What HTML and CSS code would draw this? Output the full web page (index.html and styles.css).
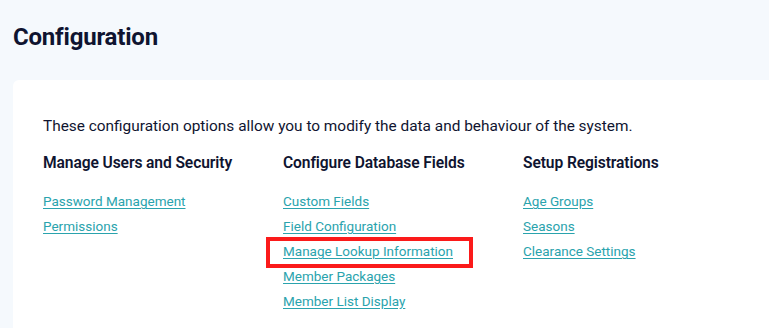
FILE: index.html
```html
<!DOCTYPE html>
<html lang="en">
<head>
    <meta charset="UTF-8">
    <title>Configuration</title>
    <link rel="stylesheet" href="styles.css">
</head>
<body>
    <div class="page">
        <h1 class="page-title">Configuration</h1>

        <div class="card">
            <p class="card-intro">These configuration options allow you to modify the data and behaviour of the system.</p>

            <div class="config-columns">
                <div class="config-group">
                    <h2 class="config-heading">Manage Users and Security</h2>
                    <ul class="config-links">
                        <li><a href="#">Password Management</a></li>
                        <li><a href="#">Permissions</a></li>
                    </ul>
                </div>

                <div class="config-group">
                    <h2 class="config-heading">Configure Database Fields</h2>
                    <ul class="config-links">
                        <li><a href="#">Custom Fields</a></li>
                        <li><a href="#">Field Configuration</a></li>
                        <li class="highlight"><a href="#">Manage Lookup Information</a></li>
                        <li><a href="#">Member Packages</a></li>
                        <li><a href="#">Member List Display</a></li>
                    </ul>
                </div>

                <div class="config-group">
                    <h2 class="config-heading">Setup Registrations</h2>
                    <ul class="config-links">
                        <li><a href="#">Age Groups</a></li>
                        <li><a href="#">Seasons</a></li>
                        <li><a href="#">Clearance Settings</a></li>
                    </ul>
                </div>
            </div>
        </div>
    </div>
</body>
</html>
```

FILE: styles.css
```css
/* Page */
body {
    margin: 0;
    background: #f5f9fd;
    font-family: Roboto, "Liberation Sans", sans-serif;
    color: #0f1430;
}

.page {
    padding: 22px 0 0 13px;
    height: 306px;
    overflow: hidden;
}

.page-title {
    font-size: 24px;
    font-weight: 700;
    margin: 0 0 28px 0;
    line-height: 30px;
    letter-spacing: -0.2px;
}

/* Card */
.card {
    background: white;
    border-radius: 6px 0 0 6px;
    padding: 36px 30px 20px;
    margin-right: -20px;
    height: 260px;
}

.card-intro {
    font-size: 15.4px;
    line-height: 20px;
    margin: 0 0 17px 0;
}

/* Columns */
.config-columns {
    display: flex;
}

.config-group {
    width: 240px;
    flex-shrink: 0;
}

.config-heading {
    font-size: 15.6px;
    font-weight: 600;
    line-height: 20px;
    margin: 0 0 15px 0;
    letter-spacing: -0.1px;
}

.config-links {
    list-style: none;
    margin: 0;
    padding: 0;
}

.config-links li {
    height: 25px;
    line-height: 25px;
}

.config-links a {
    color: #2aa3ad;
    font-size: 13.5px;
    text-decoration: underline;
    text-underline-offset: 2px;
}

/* Annotation box */
.config-links .highlight {
    position: relative;
}

.config-links .highlight::after {
    content: "";
    position: absolute;
    left: -17px;
    top: -1px;
    width: 207px;
    height: 31px;
    border: 4px solid #fb1a1a;
    box-sizing: border-box;
}
```
